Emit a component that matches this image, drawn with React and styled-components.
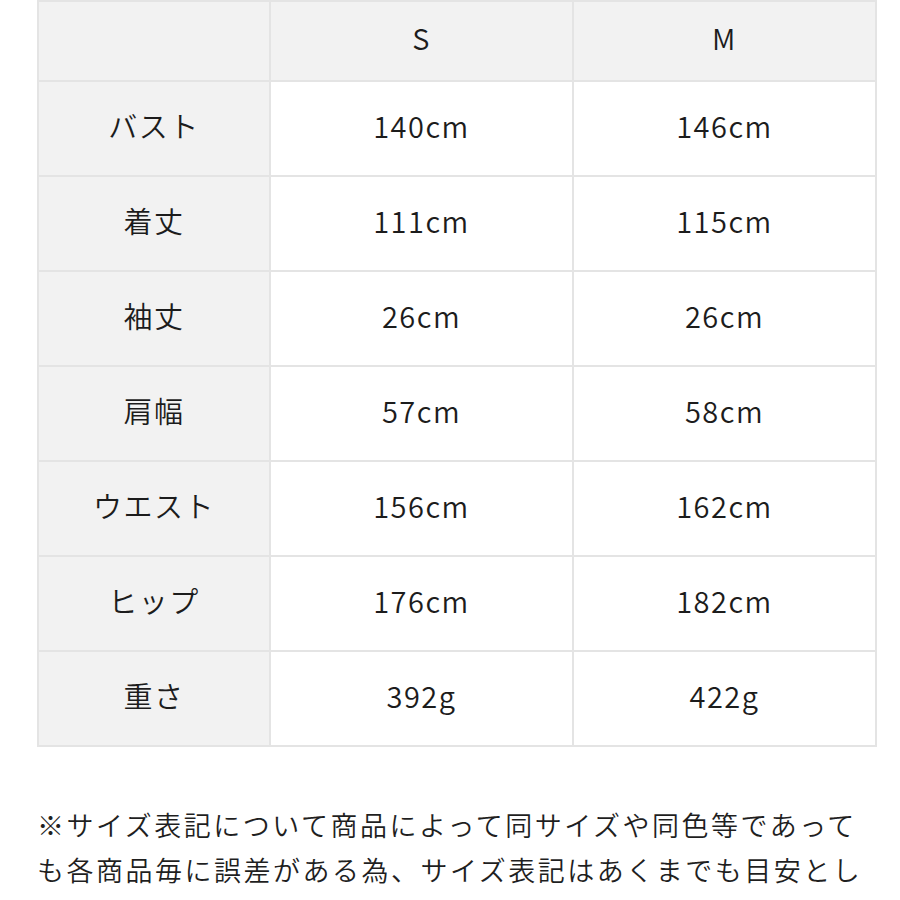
import React from 'react';
import styled, { createGlobalStyle } from 'styled-components';

const GlobalStyle = createGlobalStyle`
  html, body {
    margin: 0;
    padding: 0;
    background: #fff;
  }
  body {
    font-family: "Noto Sans CJK JP", "Noto Sans", sans-serif;
    color: #222;
  }
`;

const Page = styled.div`
  width: 896px;
  height: 900px;
  border-right: 2px solid #5a5a5a;
  overflow: hidden;
  padding-left: 37px;
  box-sizing: content-box;
`;

const Table = styled.div`
  display: grid;
  grid-template-columns: 230px 301px 301px;
  grid-template-rows: 78px repeat(7, 93px);
  gap: 2px;
  padding: 2px;
  width: 840px;
  box-sizing: border-box;
  background: #e4e4e4;
`;

const Cell = styled.div`
  display: flex;
  align-items: center;
  justify-content: center;
  padding-bottom: 8px;
  background: ${p => (p.shaded ? '#f2f2f2' : '#fff')};
  font-size: 29px;
  font-weight: 350;
  letter-spacing: 1.5px;
  color: #1c1c1c;
`;

const Note = styled.p`
  margin: 55px 0 0;
  font-size: 27px;
  font-weight: 350;
  line-height: 45px;
  letter-spacing: 2.5px;
  color: #1f1f1f;
`;

const Line = styled.span`
  display: block;
  white-space: nowrap;
`;

const rows = [
  ['バスト', '140cm', '146cm'],
  ['着丈', '111cm', '115cm'],
  ['袖丈', '26cm', '26cm'],
  ['肩幅', '57cm', '58cm'],
  ['ウエスト', '156cm', '162cm'],
  ['ヒップ', '176cm', '182cm'],
  ['重さ', '392g', '422g'],
];

export default function App() {
  return (
    <Page>
      <GlobalStyle />
      <Table>
        <Cell shaded />
        <Cell shaded>S</Cell>
        <Cell shaded>M</Cell>
        {rows.map(([label, s, m]) => (
          <React.Fragment key={label}>
            <Cell shaded>{label}</Cell>
            <Cell>{s}</Cell>
            <Cell>{m}</Cell>
          </React.Fragment>
        ))}
      </Table>
      <Note>
        <Line>※サイズ表記について商品によって同サイズや同色等であって</Line>
        <Line>も各商品毎に誤差がある為、サイズ表記はあくまでも目安とし</Line>
      </Note>
    </Page>
  );
}
